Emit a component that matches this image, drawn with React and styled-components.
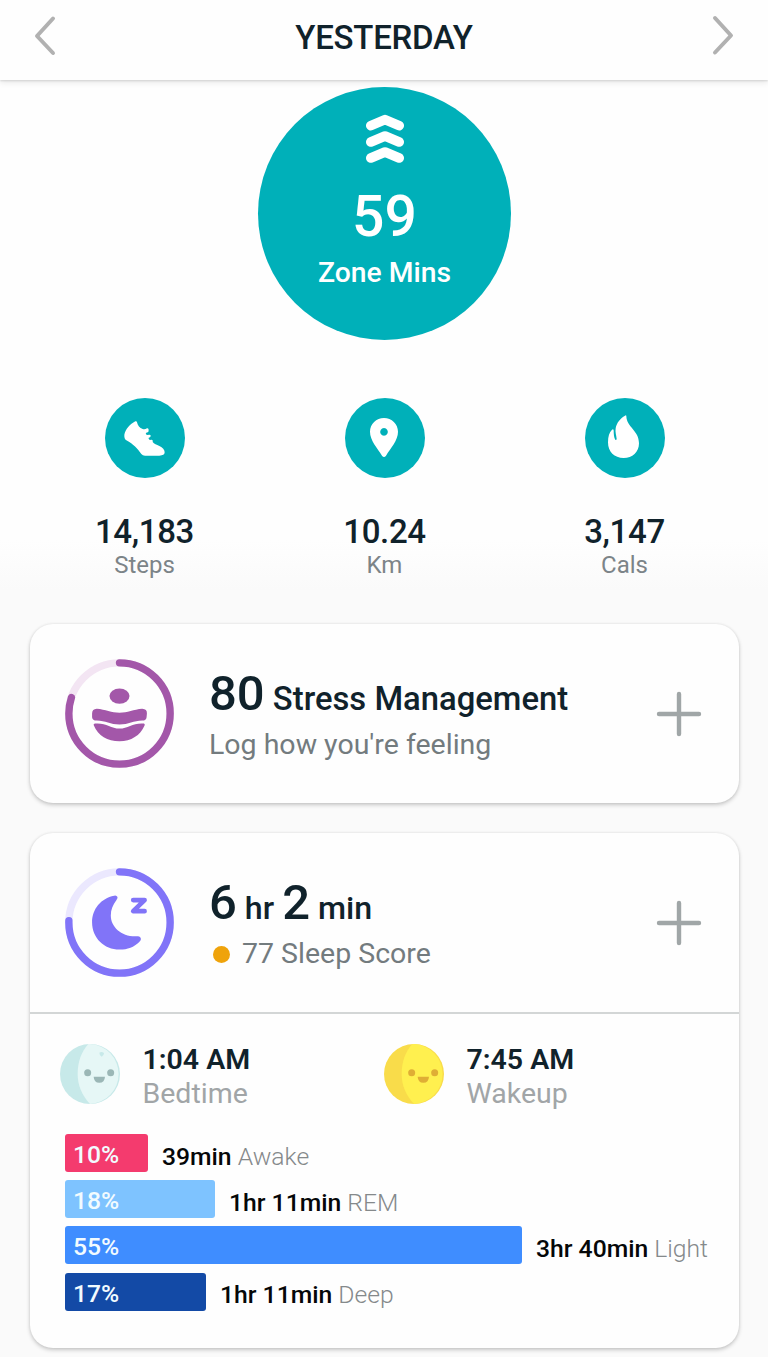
import React from 'react';
import styled, { createGlobalStyle } from 'styled-components';

const GlobalStyle = createGlobalStyle`
  * { box-sizing: border-box; }
  body {
    margin: 0;
    background: #fafafa;
    font-family: Roboto, "Liberation Sans", sans-serif;
    color: #10222b;
  }
  svg { display: block; flex: none; }
`;

const Screen = styled.div`
  width: 768px;
  height: 1357px;
  overflow: hidden;
  display: flex;
  flex-direction: column;
`;

const Header = styled.header`
  position: relative;
  z-index: 1;
  height: 80px;
  flex: none;
  display: flex;
  align-items: flex-start;
  justify-content: space-between;
  padding: 15px 34px 0;
  background: #fefefe;
  box-shadow: 0 1px 2px rgba(0, 0, 0, 0.13), 0 3px 6px rgba(0, 0, 0, 0.08);
`;

const Title = styled.h1`
  margin: 1px 0 0;
  font-size: 33px;
  line-height: 44px;
  font-weight: 500;
  letter-spacing: -0.25px;
`;

const Summary = styled.section`
  height: 544px;
  flex: none;
  padding-top: 7px;
  display: flex;
  flex-direction: column;
  align-items: center;
  background: linear-gradient(#fefefe 460px, #fafafa 510px);
`;

const ZoneCircle = styled.div`
  width: 253px;
  height: 253px;
  border-radius: 50%;
  background: #00b0b9;
  color: #fff;
  display: flex;
  flex-direction: column;
  align-items: center;
  padding: 27px 0 0 1px;
`;

const ZoneValue = styled.div`
  font-size: 57px;
  line-height: 60px;
  font-weight: 500;
  margin-top: 23px;
`;

const ZoneLabel = styled.div`
  font-size: 28.3px;
  line-height: 36px;
  font-weight: 500;
  margin-top: 8px;
`;

const Stats = styled.div`
  display: grid;
  grid-template-columns: repeat(3, 240px);
  margin-top: 58px;
  padding-left: 1px;
`;

const Stat = styled.div`
  display: flex;
  flex-direction: column;
  align-items: center;
`;

const StatBadge = styled.div`
  width: 80px;
  height: 80px;
  border-radius: 50%;
  background: #00b0b9;
`;

const StatValue = styled.div`
  margin-top: 34px;
  font-size: 33px;
  line-height: 39px;
  font-weight: 500;
  letter-spacing: -0.35px;
`;

const StatLabel = styled.div`
  font-size: 24px;
  line-height: 28px;
  color: #7c8488;
`;

const Card = styled.article`
  flex: none;
  width: 709px;
  height: ${(p) => p.$height}px;
  margin: 0 0 30px 30px;
  border-radius: 23px;
  background: #fefefe;
  box-shadow: 0 2px 4px rgba(0, 0, 0, 0.2), 0 0 3px rgba(0, 0, 0, 0.08);
`;

const CardHead = styled.div`
  height: 179px;
  display: flex;
  align-items: center;
  padding: 0 37px 0 35px;
`;

const CardText = styled.div`
  flex: 1;
  margin-left: 35px;
`;

const Headline = styled.div`
  font-size: ${(p) => p.$size}px;
  line-height: 56px;
  margin-top: 2px;
  font-weight: 500;
  white-space: pre;
`;

const Big = styled.span`
  font-size: 49px;
`;

const Subline = styled.div`
  display: flex;
  align-items: center;
  font-size: 28.5px;
  line-height: 36px;
  margin-top: 0;
  color: #737b7e;
`;

const ScoreDot = styled.span`
  width: 17px;
  height: 17px;
  margin: 1px 12px 0 4px;
  border-radius: 50%;
  background: #efa30b;
`;

const SleepDetails = styled.div`
  border-top: 2px solid #d3d6d6;
  padding-top: 28px;
`;

const Times = styled.div`
  display: grid;
  grid-template-columns: 324px 1fr;
  padding-left: 30px;
`;

const TimeEntry = styled.div`
  display: flex;
  gap: 22.5px;
  padding-top: 2px;
`;

const TimeText = styled.div`
  display: flex;
  flex-direction: column;
  font-size: 28.5px;
  line-height: 34px;
  margin-top: -1px;
`;

const TimeValue = styled.span`
  font-weight: 600;
`;

const TimeLabel = styled.span`
  color: #a1a5a7;
`;

const Stages = styled.div`
  display: flex;
  flex-direction: column;
  gap: 8.2px;
  margin: 23px 0 0 35px;
`;

const Stage = styled.div`
  height: 38px;
  display: flex;
  align-items: center;
  gap: 14px;
  font-size: 24.7px;
  line-height: 38px;
`;

const StageBar = styled.div`
  height: 38px;
  padding: 2px 0 0 8px;
  border-radius: 3px;
  background: ${(p) => p.$color};
  color: #f2fbff;
  font-weight: 500;
`;

const StageText = styled.div`
  padding-top: 7px;
  color: #85898b;
  font-weight: 300;
  white-space: pre;
`;

const Duration = styled.span`
  color: #050708;
  font-weight: 500;
`;

const Arrow = ({ flip }) => (
  <svg width="22" height="42" viewBox="0 0 22 42" fill="none" stroke="#b1b1b1" strokeWidth="4" strokeLinecap="round" strokeLinejoin="round">
    <path d={flip ? 'M3 3 L19 20.5 L3 37.5' : 'M19 3.5 L3 21 L19 38'} />
  </svg>
);

const ZoneIcon = () => (
  <svg width="38" height="50" viewBox="0 0 114 150" fill="none" stroke="#fff" strokeWidth="29" strokeLinecap="round" strokeLinejoin="round">
    <path d="M14.500 35 L57 17 L99.500 35 M14.500 84 L57 66 L99.500 84 M14.500 132 L57 114 L99.500 132" />
  </svg>
);

const ShoeIcon = () => (
  <svg width="80" height="80" viewBox="0 0 240 240" fill="#fff">
    <path d="M91 70 Q95 68 96 73 C98 83 104 90 113 93 C119 95 122 93 126 91 Q131 90 131 96 L130 102 L122 105 L125 111 L134 110 Q138 110 137 115 Q136 118 130 120 L134 126 L141 125 Q145 127 143 132 C147 138 155 140 163 144 C173 148 179 155 179 163 Q179 173 163 173 L120 173 Q113 173 109 168 C97 152 86 139 64 127 Q57 122 58 110 C61 95 75 78 91 70 Z" />
  </svg>
);

const PinIcon = () => (
  <svg width="80" height="80" viewBox="0 0 240 240" fill="#fff" fillRule="evenodd">
    <path d="M117 60 C140 60 159 78 159 101 C159 127 137 150 123 173 Q117 181 111 173 C97 150 75 127 75 101 C75 78 94 60 117 60 Z M117 90 a11.500 11.500 0 1 0 0.010 0 Z" />
  </svg>
);

const FlameIcon = () => (
  <svg width="80" height="80" viewBox="0 0 240 240" fill="#fff">
    <path d="M120 53 Q124 50 124 55 C125 88 162 97 162 136 C162 163 142 180 116 180 C88 180 69 162 69 133 C69 115 73 103 81 95 Q85 92 86 97 C86 108 87 120 91 125 Q94 127 95 123 C94 112 90 103 92 91 C95 74 106 61 120 53 Z" />
  </svg>
);

const Ring = ({ color, track, percent, children }) => (
  <svg width="109" height="109" viewBox="0 0 326 326">
    <circle cx="163" cy="163" r="151.500" fill="none" stroke={track} strokeWidth="22" />
    <circle cx="163" cy="163" r="151.500" fill="none" stroke={color} strokeWidth="22" strokeLinecap="round"
      pathLength="100" strokeDasharray={`${percent} 100`} transform="rotate(-90 163 163)" />
    {children}
  </svg>
);

const StressGlyph = () => (
  <g fill="#a357a9">
    <ellipse cx="163" cy="111" rx="30" ry="22.500" />
    <path d="M95 149 C121 151 139 161 163 161 C187 161 205 151 231 149 Q246 150 245 163 L244 174 Q243 184 231 184 C205 184 190 196 163 196 C136 196 121 184 95 184 Q82 184 81 174 L81 163 Q81 150 95 149 Z" />
    <path d="M90 193 C122 190 137 208 163 208 C189 208 204 190 236 193 Q240 194 238 199 C225 229 198 246 163 246 C127 246 99 229 86 198 Q84 193 90 193 Z" />
  </g>
);

const SleepGlyph = () => (
  <g fill="#8174f8">
    <path d="M147 83 Q154 81 157 87 Q158 90 154 96 C143 112 137 125 137 142 C137 178 172 208 218 204 Q227 205 227 213 Q227 216 222 221 C207 236 187 244 163 244 C117 244 81 209 81 163 C81 123 107 91 147 83 Z" />
    <path d="M204 96 H238 L204 129 H238" fill="none" stroke="#8174f8" strokeWidth="14" strokeLinecap="round" strokeLinejoin="round" />
  </g>
);

const PlusIcon = () => (
  <svg width="46" height="46" viewBox="0 0 46 46" stroke="#a0a6a7" strokeWidth="4.400" strokeLinecap="round">
    <path d="M23 3 V43 M3 23 H43" />
  </svg>
);

const Face = ({ shade, light, feature, spot }) => (
  <svg width="60" height="60" viewBox="0 0 180 180">
    <circle cx="90" cy="90" r="90" fill={shade} />
    <path d="M85 0.200 H90 A90 90 0 0 1 90 180 C66 154 53 124 53 90 C53 53 64 24 85 0.200 Z" fill={light} />
    <g fill={feature}>
      <circle cx="83" cy="86" r="10.500" />
      <circle cx="152" cy="86" r="10.500" />
      <path d="M101 98 H135 Q134 116 118 116 Q102 116 101 98 Z" />
    </g>
    {spot && <path d="M118 26 Q125 22 132 27 Q132 36 125 38 Q118 35 118 26 Z" fill={spot} />}
  </svg>
);

const stats = [
  { icon: <ShoeIcon />, value: '14,183', label: 'Steps' },
  { icon: <PinIcon />, value: '10.24', label: 'Km' },
  { icon: <FlameIcon />, value: '3,147', label: 'Cals' },
];

const stages = [
  { percent: '10%', width: 83, color: '#f43b6e', duration: '39min', name: 'Awake' },
  { percent: '18%', width: 150, color: '#7ec3ff', duration: '1hr 11min', name: 'REM' },
  { percent: '55%', width: 457, color: '#3f8dff', duration: '3hr 40min', name: 'Light' },
  { percent: '17%', width: 141, color: '#134aa6', duration: '1hr 11min', name: 'Deep' },
];

export default function App() {
  return (
    <Screen>
      <GlobalStyle />
      <Header>
        <Arrow />
        <Title>YESTERDAY</Title>
        <Arrow flip />
      </Header>
      <Summary>
        <ZoneCircle>
          <ZoneIcon />
          <ZoneValue>59</ZoneValue>
          <ZoneLabel>Zone Mins</ZoneLabel>
        </ZoneCircle>
        <Stats>
          {stats.map((s) => (
            <Stat key={s.label}>
              <StatBadge>{s.icon}</StatBadge>
              <StatValue>{s.value}</StatValue>
              <StatLabel>{s.label}</StatLabel>
            </Stat>
          ))}
        </Stats>
      </Summary>
      <Card $height={179}>
        <CardHead>
          <Ring color="#a357a9" track="#f3e5f3" percent={80}>
            <StressGlyph />
          </Ring>
          <CardText>
            <Headline $size={32.8}><Big>80</Big> Stress Management</Headline>
            <Subline>Log how you're feeling</Subline>
          </CardText>
          <PlusIcon />
        </CardHead>
      </Card>
      <Card $height={515}>
        <CardHead>
          <Ring color="#8174f8" track="#ebe8fe" percent={75.500}>
            <SleepGlyph />
          </Ring>
          <CardText>
            <Headline $size={32.2}><Big>6</Big> hr <Big>2</Big> min</Headline>
            <Subline><ScoreDot />77 Sleep Score</Subline>
          </CardText>
          <PlusIcon />
        </CardHead>
        <SleepDetails>
          <Times>
            <TimeEntry>
              <Face shade="#c7e9e9" light="#e6f7f6" feature="#9bb7b6" spot="#c7e9e9" />
              <TimeText>
                <TimeValue>1:04 AM</TimeValue>
                <TimeLabel>Bedtime</TimeLabel>
              </TimeText>
            </TimeEntry>
            <TimeEntry>
              <Face shade="#f9dc4a" light="#fff04f" feature="#dfae35" />
              <TimeText>
                <TimeValue>7:45 AM</TimeValue>
                <TimeLabel>Wakeup</TimeLabel>
              </TimeText>
            </TimeEntry>
          </Times>
          <Stages>
            {stages.map((s) => (
              <Stage key={s.name}>
                <StageBar $color={s.color} style={{ width: s.width }}>{s.percent}</StageBar>
                <StageText><Duration>{s.duration}</Duration> {s.name}</StageText>
              </Stage>
            ))}
          </Stages>
        </SleepDetails>
      </Card>
    </Screen>
  );
}
